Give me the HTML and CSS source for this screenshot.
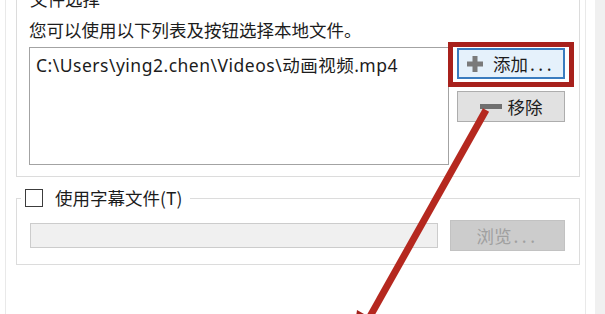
FILE: index.html
```html
<!DOCTYPE html>
<html lang="zh-CN">
<head>
<meta charset="utf-8">
<title>文件选择</title>
<link rel="stylesheet" href="styles.css">
</head>
<body>
<div class="window">
  <div class="panel">
    <fieldset class="group group-files">
      <legend class="group-title">文件选择</legend>
      <div class="group-body files-body">
        <p class="hint">您可以使用以下列表及按钮选择本地文件。</p>
        <div class="files-row">
          <div class="listbox">
            <div class="list-item">C:\Users\ying2.chen\Videos\动画视频.mp4</div>
          </div>
          <div class="btn-col">
            <div class="add-wrap">
              <button class="btn btn-add"><svg class="icon-plus" width="16" height="16" viewBox="0 0 16 16"><path d="M5.5 0h5v5.5H16v5h-5.5V16h-5v-5.5H0v-5h5.5z" fill="#7a7a7a"/></svg><span class="btn-label">添加</span><span class="dots">...</span></button>
              <div class="highlight"></div>
            </div>
            <button class="btn btn-remove"><span class="icon-minus"></span><span class="btn-label">移除</span></button>
          </div>
        </div>
      </div>
    </fieldset>
    <fieldset class="group group-sub">
      <legend class="sub-legend"><span class="checkbox"></span><span class="sub-label">使用字幕文件(T)</span></legend>
      <div class="group-body sub-body">
        <div class="sub-row">
          <div class="textbox"></div>
          <button class="btn btn-browse" disabled>浏览<span class="dots">...</span></button>
        </div>
      </div>
    </fieldset>
  </div>
  <div class="strip"></div>
</div>
<svg class="arrow" width="605" height="314" viewBox="0 0 605 314">
  <line x1="486" y1="110" x2="368" y2="320" stroke="#b5281f" stroke-width="7"/>
  <polygon points="357,310 385,326 352,346" fill="#a3221b"/>
</svg>
</body>
</html>
```
FILE: styles.css
```css
html, body {
  margin: 0;
  padding: 0;
}

body {
  width: 605px;
  height: 314px;
  overflow: hidden;
  position: relative;
  background: #ffffff;
  font-family: "Noto Sans CJK SC", sans-serif;
  font-size: 17.5px;
  color: #1c1c1c;
}

.window {
  display: flex;
  height: 314px;
}

.panel {
  margin-left: 5px;
  width: 581px;
  box-sizing: border-box;
  border-left: 1px solid #e9e9e9;
  border-right: 1px solid #e9e9e9;
  padding: 0 5px 0 10px;
}

.strip {
  margin-left: 9px;
  flex: 1;
  background: #f0f0f0;
}

.group {
  margin: 0;
  padding: 0;
  border: 1px solid #dcdcdc;
  min-width: 0;
}

.group-files {
  margin-top: -11px;
}

.files-body {
  padding: 0 14px 11px 12px;
}

.group-title {
  margin-left: 10px;
  padding: 0 3px;
  line-height: 20px;
}

.hint {
  margin: 11px 0 7px;
  line-height: 20px;
}

.files-row {
  display: flex;
  align-items: flex-start;
}

.listbox {
  width: 420px;
  height: 118px;
  box-sizing: border-box;
  border: 1px solid #a3a3a3;
  padding: 6px 6px;
}

.list-item {
  font-family: "Noto Sans", "Noto Sans CJK SC", sans-serif;
  font-size: 17.5px;
  letter-spacing: 0.5px;
  line-height: 22px;
  color: #1c1c1c;
  white-space: nowrap;
}

.btn-col {
  margin-left: 8px;
  padding-top: 1px;
  display: flex;
  flex-direction: column;
  gap: 12px;
}

.add-wrap {
  position: relative;
}

.btn {
  width: 108px;
  height: 31px;
  box-sizing: border-box;
  margin: 0;
  padding: 0;
  display: flex;
  align-items: center;
  justify-content: center;
  font-family: "Noto Sans CJK SC", sans-serif;
  font-size: 17.5px;
  color: #1c1c1c;
  background: #e1e1e1;
  border: 1px solid #adadad;
  border-radius: 0;
}

.btn-add {
  background: #e5f1fb;
  border: 2px solid #3a7cbf;
}

.icon-plus {
  display: block;
  margin-right: 10px;
}

.dots {
  letter-spacing: 3.5px;
  margin-left: 2px;
}

.highlight {
  position: absolute;
  left: -9px;
  top: -6px;
  right: -9px;
  bottom: -8px;
  border: 5px solid #a8211c;
  pointer-events: none;
}

.icon-minus {
  display: block;
  width: 22px;
  height: 5px;
  background: #6f6f6f;
  margin-right: 6px;
}

.group-sub {
  margin-top: 11px;
}

.sub-body {
  padding: 0 14px 13px 13px;
}

.sub-legend {
  margin-left: 4px;
  padding: 0 8px 0 4px;
  display: flex;
  align-items: center;
  line-height: 20px;
}

.checkbox {
  display: block;
  width: 18px;
  height: 18px;
  box-sizing: border-box;
  border: 1px solid #3c3c3c;
  background: #ffffff;
}

.sub-label {
  margin-left: 12px;
}

.sub-row {
  margin-top: 12px;
  display: flex;
  align-items: center;
}

.textbox {
  width: 408px;
  height: 25px;
  box-sizing: border-box;
  background: #f0f0f0;
  border: 1px solid #cccccc;
}

.btn-browse {
  margin-left: 12px;
  width: 115px;
  background: #cccccc;
  border: 1px solid #c2c2c2;
  color: #a0a0a0;
}

.arrow {
  position: absolute;
  left: 0;
  top: 0;
  pointer-events: none;
}
```
